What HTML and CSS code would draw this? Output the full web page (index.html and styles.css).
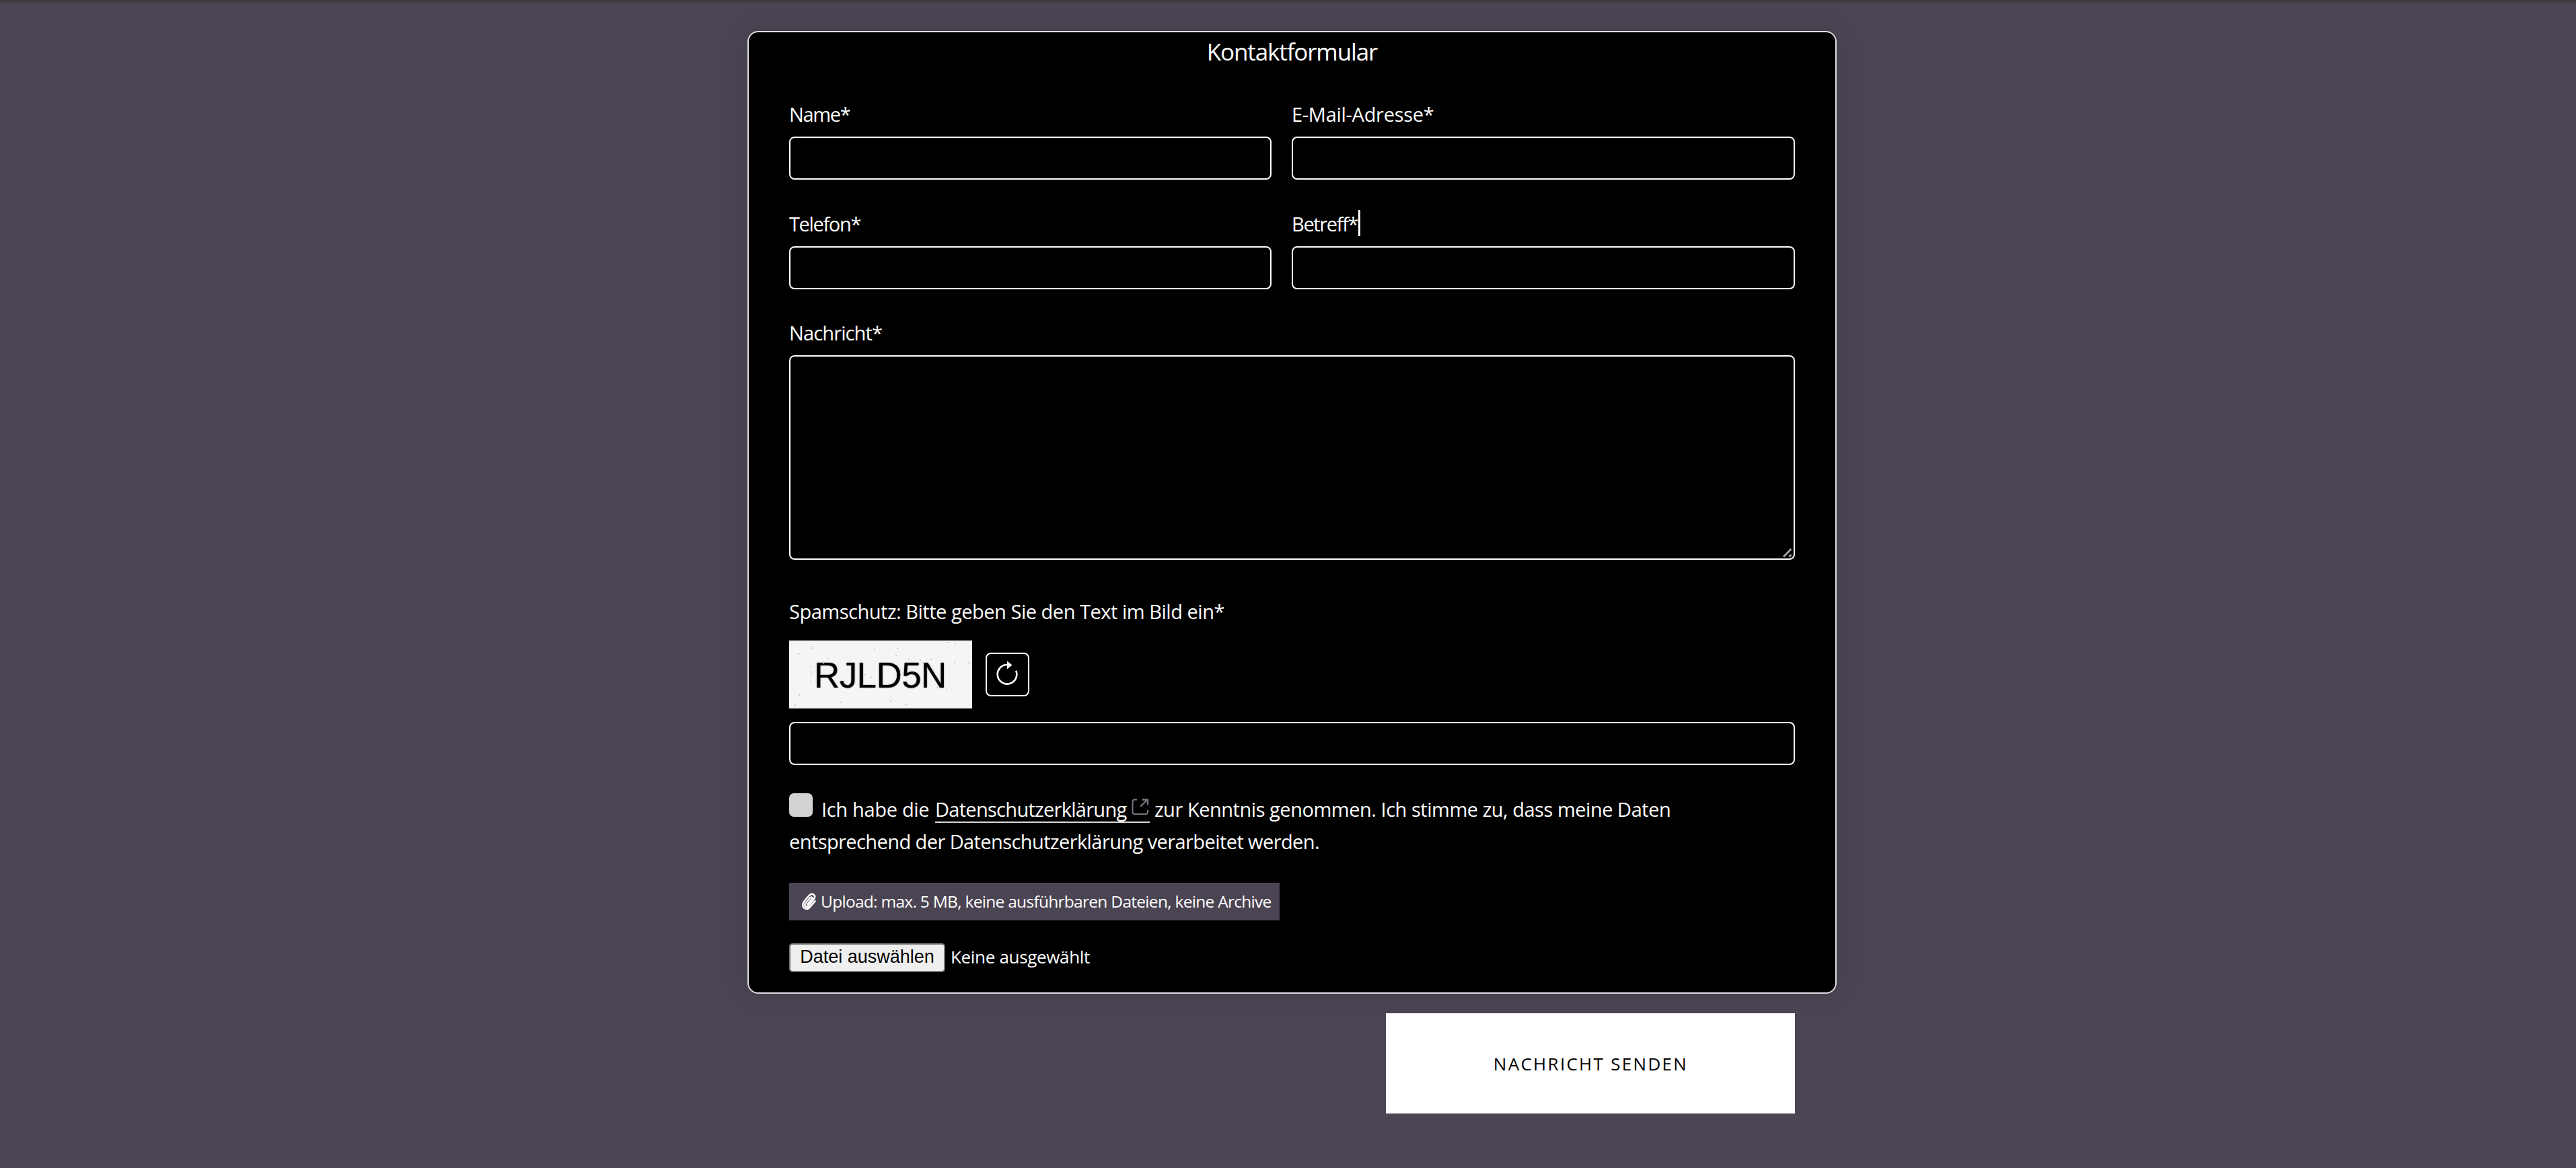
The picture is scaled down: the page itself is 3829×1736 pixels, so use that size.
FILE: index.html
```html
<!DOCTYPE html>
<html lang="de">
<head>
<meta charset="utf-8">
<title>Kontaktformular</title>
<link rel="stylesheet" href="styles.css">
</head>
<body>
<form class="contact">
  <section class="card">
    <h1 class="title">Kontaktformular</h1>

    <div class="fields">
      <div class="field">
        <label class="label t-name" for="name">Name*</label>
        <input class="input" id="name" type="text">
      </div>
      <div class="field">
        <label class="label t-mail" for="mail">E-Mail-Adresse*</label>
        <input class="input" id="mail" type="email">
      </div>
      <div class="field">
        <label class="label t-phone" for="phone">Telefon*</label>
        <input class="input" id="phone" type="tel">
      </div>
      <div class="field">
        <label class="label t-subject" for="subject">Betreff*<span class="caret"></span></label>
        <input class="input" id="subject" type="text">
      </div>
    </div>

    <div class="field message">
      <label class="label t-message" for="message">Nachricht*</label>
      <div class="area">
        <textarea class="input textarea" id="message"></textarea>
        <svg class="grip" viewBox="0 0 14 14" width="14" height="14" fill="none" stroke="#a3a3a3" stroke-width="3"><path d="M1 12.500L12.500 1M9.500 12.500L12.500 9.500"/></svg>
      </div>
    </div>

    <div class="spam">
      <label class="label t-spam" for="captcha">Spamschutz: Bitte geben Sie den Text im Bild ein*</label>
      <div class="captcha-row">
        <div class="captcha">
          <span class="captcha-text">RJLD5N</span>
          <svg class="specks" viewBox="0 0 272 101" width="272" height="101" fill="none" stroke="#b8b8b8" stroke-width="1.800" stroke-linecap="round"><path d="M33 9h0M33 12h0M14 20h0M58 27h0M127 13h0M161 12h0M159 22h0M235 3h0M247 4h0M178 28h0M195 29h0M211 28h0M198 33h0M246 33h0M267 33h0M32 39h0M33 49h0M32 61h0M113 51h0M122 55h0M15 81h0M9 96h0M77 92h0M151 90h0M174 95h0M234 73h0M220 70h0M51 34h0"/></svg>
        </div>
        <button class="reload" type="button" aria-label="Neu laden">
          <svg viewBox="0 0 65 65" width="65" height="65"><path d="M32 18A14.300 14.300 0 1 0 45.200 26.800" fill="none" stroke="#fff" stroke-width="2.600"/><path d="M32 12.500V24.500L39.500 18.500Z" fill="#fff"/></svg>
        </button>
      </div>
      <input class="input" id="captcha" type="text">
    </div>

    <div class="consent">
      <div class="line">
        <span class="check"></span>
        <span class="t-read">Ich habe die</span>
        <a class="link" href="#"><span class="t-link">Datenschutzerklärung</span><svg viewBox="0 0 26 26" width="26" height="26" fill="none" stroke="#747b84" stroke-width="2"><path d="M8 1.500H4.500Q1.500 1.500 1.500 4.500V20Q1.500 23 4.500 23H21Q24 23 24 20V16.500"/><path d="M13 11.500L23.500 1.800M15.500 1.500H24V9.500" stroke-width="2.300"/></svg></a>
        <span class="t-agree">zur Kenntnis genommen. Ich stimme zu, dass meine Daten</span>
      </div>
      <div class="line t-rest">entsprechend der Datenschutzerklärung verarbeitet werden.</div>
    </div>

    <div class="upload">
      <svg viewBox="0 0 22 26" width="22" height="26" fill="none" stroke="#fff" stroke-width="2.600" stroke-linecap="round"><path d="M8 17.500L14.500 9.500Q16 7.800 14.700 6.800Q13.400 5.900 12 7.500L5.200 15.800Q3.200 18.500 5.300 20.300Q7.600 22 9.800 19.400L17.200 10.200Q20.800 5.600 17.600 2.800Q14 .2 10.300 4.300L3.500 12.500Q-.8 18.200 3 22.300Q7.600 26 12.200 21L19.500 12.300"/></svg>
      <span>Upload: max. 5 MB, keine ausführbaren Dateien, keine Archive</span>
    </div>

    <div class="file">
      <button class="file-button" type="button">Datei auswählen</button>
      <span class="file-state">Keine ausgewählt</span>
    </div>
  </section>

  <button class="send" type="button">NACHRICHT SENDEN</button>
</form>
</body>
</html>
```
FILE: styles.css
```css
* {
  box-sizing: border-box;
}

body {
  margin: 0;
  min-height: 1736px;
  border-top: 4px solid #3d3e3b;
  background: #4b4452;
  color: #fff;
  font: 29px/48px "Open Sans", "Noto Sans", sans-serif;
}

.contact {
  width: 1619px;
  margin: 42px 0 0 1111px;
  display: flex;
  flex-direction: column;
}

.card {
  height: 1431px;
  padding: 5px 60px 0;
  border: 2px solid #dfdce3;
  border-radius: 16px;
  background: #000;
  box-shadow: 0 0 40px rgba(0, 0, 0, 0.1);
}

.title {
  margin: 0 0 45px;
  font-size: 35px;
  line-height: 48px;
  font-weight: 400;
  letter-spacing: -1.13px;
  text-align: center;
}

.fields {
  display: grid;
  grid-template-columns: 717px 748px;
  gap: 42px 30px;
}

.field,
.spam {
  display: flex;
  flex-direction: column;
}

.label {
  position: relative;
  height: 48px;
  margin-bottom: 9px;
  white-space: nowrap;
}

.t-name { letter-spacing: -1.34px; }
.t-mail { letter-spacing: -0.29px; }
.t-phone { letter-spacing: -1.35px; }
.t-subject { letter-spacing: -1.35px; }
.t-message { letter-spacing: -0.87px; }
.t-spam { letter-spacing: -0.476px; }
.t-read { letter-spacing: -0.32px; }
.t-link { letter-spacing: -0.71px; }
.t-agree { letter-spacing: -0.47px; }
.t-rest { letter-spacing: -0.583px; }

.caret {
  position: absolute;
  left: 99px;
  top: 3px;
  width: 3px;
  height: 39px;
  background: #fff;
}

.input {
  display: block;
  width: 100%;
  height: 64px;
  margin: 0;
  padding: 0 16px;
  border: 2px solid #fff;
  border-radius: 8px;
  background: #000;
  color: #fff;
  font: inherit;
  outline: none;
}

.message {
  margin-top: 41px;
}

.area {
  position: relative;
}

.textarea {
  height: 304px;
  resize: none;
}

.grip {
  position: absolute;
  right: 4px;
  bottom: 3px;
}

.spam {
  margin-top: 53px;
}

.t-spam {
  margin-bottom: 19px;
}

.captcha-row {
  display: flex;
  align-items: flex-start;
  gap: 20px;
  margin-bottom: 20px;
}

.captcha {
  position: relative;
  width: 272px;
  height: 101px;
  padding-left: 37px;
  background: #f5f5f5;
  color: #000;
}

.captcha-text {
  font: 53px/103px "Liberation Sans", Arial, sans-serif;
  letter-spacing: -0.6px;
  text-shadow: 0 0 2px rgba(0, 0, 0, 0.6);
}

.specks {
  position: absolute;
  inset: 0;
}

.reload {
  width: 65px;
  height: 65px;
  margin: 18px 0 0;
  padding: 0;
  border: 2px solid #fff;
  border-radius: 8px;
  background: #000;
}

.reload svg {
  display: block;
  margin: -2px;
}

.consent {
  margin-top: 42px;
}

.line {
  display: flex;
  height: 48px;
  white-space: nowrap;
}

.line > * {
  flex: none;
}

.check {
  width: 35px;
  height: 35px;
  margin-right: 13px;
  border-radius: 7px;
  background: #d3d3d3;
}

.t-read {
  width: 169px;
}

.link {
  display: flex;
  width: 319px;
  height: 44px;
  margin-right: 7px;
  border-bottom: 2px solid #d8d8d8;
  color: #fff;
  text-decoration: none;
}

.link svg {
  margin: 8px 1px 0 auto;
}

.t-rest {
  display: block;
}

.upload {
  display: flex;
  align-items: center;
  width: 729px;
  height: 56px;
  margin-top: 37px;
  padding-left: 19px;
  gap: 6px;
  background: #4b4452;
  font-size: 24.5px;
  letter-spacing: -0.712px;
  white-space: nowrap;
}

.file {
  display: flex;
  height: 43px;
  margin-top: 34px;
  gap: 8px;
}

.file-button {
  width: 232px;
  height: 43px;
  padding: 0 0 2px;
  border: 2px solid #767676;
  border-radius: 5px;
  background: #efefef;
  color: #000;
  font: 27px/37px "Liberation Sans", Arial, sans-serif;
  white-space: nowrap;
}

.file-state {
  font-size: 26px;
  line-height: 40px;
  letter-spacing: -0.33px;
}

.send {
  align-self: flex-end;
  width: 608px;
  height: 149px;
  margin: 29px 62px 0 0;
  padding: 0 0 0 1px;
  border: 0;
  background: #fff;
  color: #000;
  font: 26px/48px "Open Sans", "Noto Sans", sans-serif;
  letter-spacing: 2.3px;
}
```
